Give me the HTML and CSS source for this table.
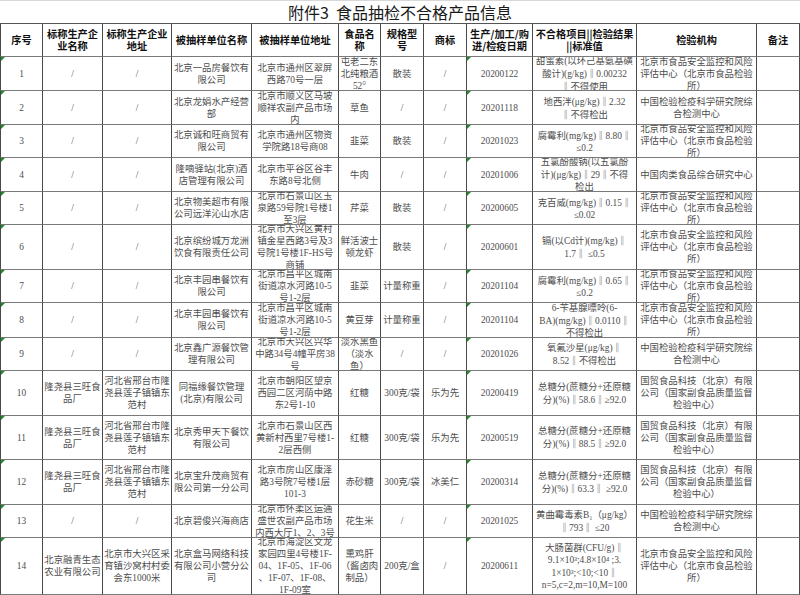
FILE: index.html
```html
<!DOCTYPE html>
<html lang="zh-CN">
<head>
<meta charset="utf-8">
<title>附件3 食品抽检不合格产品信息</title>
<link rel="stylesheet" href="styles.css">
</head>
<body>
<div class="sheet">
  <div class="title">附件3  食品抽检不合格产品信息</div>

  <div class="cell hd">序号</div>
  <div class="cell hd">标称生产企业名称</div>
  <div class="cell hd">标称生产企业地址</div>
  <div class="cell hd">被抽样单位名称</div>
  <div class="cell hd">被抽样单位地址</div>
  <div class="cell hd">食品名称</div>
  <div class="cell hd">规格型号</div>
  <div class="cell hd">商标</div>
  <div class="cell hd">生产/加工/购进/检疫日期</div>
  <div class="cell hd">不合格项目||检验结果<br>||标准值</div>
  <div class="cell hd">检验机构</div>
  <div class="cell hd">备注</div>

  <div class="cell g">1</div>
  <div class="cell">/</div>
  <div class="cell">/</div>
  <div class="cell">北京一品房餐饮有<br>限公司</div>
  <div class="cell">北京市通州区翠屏<br>西路70号一层</div>
  <div class="cell">屯老二东<br>北纯粮酒<br>52°</div>
  <div class="cell">散装</div>
  <div class="cell">/</div>
  <div class="cell g">20200122</div>
  <div class="cell"><span class="t">甜蜜素(以环己基氨基磺<br>酸计)(g/kg)<span class="b">‖</span>0.00232<br><span class="b">‖</span>不得使用</span></div>
  <div class="cell">北京市食品安全监控和风险<br>评估中心（北京市食品检验<br>所）</div>
  <div class="cell"></div>

  <div class="cell g">2</div>
  <div class="cell">/</div>
  <div class="cell">/</div>
  <div class="cell">北京龙娟水产经营<br>部</div>
  <div class="cell">北京市顺义区马坡<br>顺祥农副产品市场<br>内</div>
  <div class="cell">草鱼</div>
  <div class="cell">/</div>
  <div class="cell">/</div>
  <div class="cell g">20201118</div>
  <div class="cell"><span class="t">地西泮(μg/kg)<span class="b">‖</span>2.32<br><span class="b">‖</span>不得检出</span></div>
  <div class="cell">中国检验检疫科学研究院综<br>合检测中心</div>
  <div class="cell"></div>

  <div class="cell g">3</div>
  <div class="cell">/</div>
  <div class="cell">/</div>
  <div class="cell">北京诚和旺商贸有<br>限公司</div>
  <div class="cell">北京市通州区物资<br>学院路18号商08</div>
  <div class="cell">韭菜</div>
  <div class="cell">散装</div>
  <div class="cell">/</div>
  <div class="cell g">20201023</div>
  <div class="cell"><span class="t">腐霉利(mg/kg)<span class="b">‖</span>8.80<span class="b">‖</span><br>≤0.2</span></div>
  <div class="cell">北京市食品安全监控和风险<br>评估中心（北京市食品检验<br>所）</div>
  <div class="cell"></div>

  <div class="cell g">4</div>
  <div class="cell">/</div>
  <div class="cell">/</div>
  <div class="cell">隆嘀驿站(北京)酒<br>店管理有限公司</div>
  <div class="cell">北京市平谷区谷丰<br>东路8号北侧</div>
  <div class="cell">牛肉</div>
  <div class="cell">/</div>
  <div class="cell">/</div>
  <div class="cell g">20201006</div>
  <div class="cell"><span class="t">五氯酚酸钠(以五氯酚<br>计)(μg/kg)<span class="b">‖</span>29<span class="b">‖</span>不得<br>检出</span></div>
  <div class="cell">中国肉类食品综合研究中心</div>
  <div class="cell"></div>

  <div class="cell g">5</div>
  <div class="cell">/</div>
  <div class="cell">/</div>
  <div class="cell">北京物美超市有限<br>公司远洋沁山水店</div>
  <div class="cell">北京市石景山区玉<br>泉路59号院1号楼1<br>至3层</div>
  <div class="cell">芹菜</div>
  <div class="cell">散装</div>
  <div class="cell">/</div>
  <div class="cell g">20200605</div>
  <div class="cell"><span class="t">克百威(mg/kg)<span class="b">‖</span>0.15<span class="b">‖</span><br>≤0.02</span></div>
  <div class="cell">北京市食品安全监控和风险<br>评估中心（北京市食品检验<br>所）</div>
  <div class="cell"></div>

  <div class="cell g">6</div>
  <div class="cell">/</div>
  <div class="cell">/</div>
  <div class="cell">北京缤纷城万龙洲<br>饮食有限责任公司</div>
  <div class="cell">北京市大兴区黄村<br>镇金星西路3号及3<br>号院1号楼1F-HS号<br>商铺</div>
  <div class="cell">鲜活波士<br>顿龙虾</div>
  <div class="cell">散装</div>
  <div class="cell">/</div>
  <div class="cell g">20200601</div>
  <div class="cell"><span class="t">镉(以Cd计)(mg/kg)<span class="b">‖</span><br>1.7<span class="b">‖</span> ≤0.5</span></div>
  <div class="cell">北京市食品安全监控和风险<br>评估中心（北京市食品检验<br>所）</div>
  <div class="cell"></div>

  <div class="cell g">7</div>
  <div class="cell">/</div>
  <div class="cell">/</div>
  <div class="cell">北京丰园串餐饮有<br>限公司</div>
  <div class="cell">北京市昌平区城南<br>街道凉水河路10-5<br>号1-2层</div>
  <div class="cell">韭菜</div>
  <div class="cell">计量称重</div>
  <div class="cell">/</div>
  <div class="cell g">20201104</div>
  <div class="cell"><span class="t">腐霉利(mg/kg)<span class="b">‖</span>0.65<span class="b">‖</span><br>≤0.2</span></div>
  <div class="cell">北京市食品安全监控和风险<br>评估中心（北京市食品检验<br>所）</div>
  <div class="cell"></div>

  <div class="cell g">8</div>
  <div class="cell">/</div>
  <div class="cell">/</div>
  <div class="cell">北京丰园串餐饮有<br>限公司</div>
  <div class="cell">北京市昌平区城南<br>街道凉水河路10-5<br>号1-2层</div>
  <div class="cell">黄豆芽</div>
  <div class="cell">计量称重</div>
  <div class="cell">/</div>
  <div class="cell g">20201104</div>
  <div class="cell"><span class="t">6-苄基腺嘌呤(6-<br>BA)(mg/kg)<span class="b">‖</span>0.0110<span class="b">‖</span><br>不得检出</span></div>
  <div class="cell">北京市食品安全监控和风险<br>评估中心（北京市食品检验<br>所）</div>
  <div class="cell"></div>

  <div class="cell g">9</div>
  <div class="cell">/</div>
  <div class="cell">/</div>
  <div class="cell">北京鑫广源餐饮管<br>理有限公司</div>
  <div class="cell">北京市大兴区兴华<br>中路34号4幢平房38<br>号</div>
  <div class="cell">淡水黑鱼<br>（淡水<br>鱼）</div>
  <div class="cell">/</div>
  <div class="cell">/</div>
  <div class="cell g">20201026</div>
  <div class="cell"><span class="t">氧氟沙星(μg/kg)<span class="b">‖</span><br>8.52<span class="b">‖</span>不得检出</span></div>
  <div class="cell">中国检验检疫科学研究院综<br>合检测中心</div>
  <div class="cell"></div>

  <div class="cell g">10</div>
  <div class="cell">隆尧县三旺食<br>品厂</div>
  <div class="cell">河北省邢台市隆<br>尧县莲子镇镇东<br>范村</div>
  <div class="cell">同福缘餐饮管理<br>(北京)有限公司</div>
  <div class="cell">北京市朝阳区望京<br>西园二区河荫中路<br>东2号1-10</div>
  <div class="cell">红糖</div>
  <div class="cell">300克/袋</div>
  <div class="cell">乐为先</div>
  <div class="cell g">20200419</div>
  <div class="cell"><span class="t">总糖分(蔗糖分+还原糖<br>分)(%)<span class="b">‖</span>58.6<span class="b">‖</span>≥92.0</span></div>
  <div class="cell">国贸食品科技（北京）有限<br>公司（国家副食品质量监督<br>检验中心）</div>
  <div class="cell"></div>

  <div class="cell g">11</div>
  <div class="cell">隆尧县三旺食<br>品厂</div>
  <div class="cell">河北省邢台市隆<br>尧县莲子镇镇东<br>范村</div>
  <div class="cell">北京秀甲天下餐饮<br>有限公司</div>
  <div class="cell">北京市石景山区西<br>黄新村西里7号楼1-<br>2层西侧</div>
  <div class="cell">红糖</div>
  <div class="cell">300克/袋</div>
  <div class="cell">乐为先</div>
  <div class="cell g">20200519</div>
  <div class="cell"><span class="t">总糖分(蔗糖分+还原糖<br>分)(%)<span class="b">‖</span>88.5<span class="b">‖</span>≥92.0</span></div>
  <div class="cell">国贸食品科技（北京）有限<br>公司（国家副食品质量监督<br>检验中心）</div>
  <div class="cell"></div>

  <div class="cell g">12</div>
  <div class="cell">隆尧县三旺食<br>品厂</div>
  <div class="cell">河北省邢台市隆<br>尧县莲子镇镇东<br>范村</div>
  <div class="cell">北京宝升茂商贸有<br>限公司第一分公司</div>
  <div class="cell">北京市房山区康泽<br>路3号院7号楼1层<br>101-3</div>
  <div class="cell">赤砂糖</div>
  <div class="cell">300克/袋</div>
  <div class="cell">冰美仁</div>
  <div class="cell g">20200314</div>
  <div class="cell"><span class="t">总糖分(蔗糖分+还原糖<br>分)(%)<span class="b">‖</span>63.3<span class="b">‖</span> ≥92.0</span></div>
  <div class="cell">国贸食品科技（北京）有限<br>公司（国家副食品质量监督<br>检验中心）</div>
  <div class="cell"></div>

  <div class="cell g">13</div>
  <div class="cell">/</div>
  <div class="cell">/</div>
  <div class="cell">北京碧俊兴海商店</div>
  <div class="cell">北京市怀柔区运通<br>盛世农副产品市场<br>内西大厅1、2、3号</div>
  <div class="cell">花生米</div>
  <div class="cell">/</div>
  <div class="cell">/</div>
  <div class="cell g">20201025</div>
  <div class="cell"><span class="t">黄曲霉毒素B₁（μg/kg）<br><span class="b">‖</span>793<span class="b">‖</span> ≤20</span></div>
  <div class="cell">中国检验检疫科学研究院综<br>合检测中心</div>
  <div class="cell"></div>

  <div class="cell g">14</div>
  <div class="cell">北京融青生态<br>农业有限公司</div>
  <div class="cell">北京市大兴区采<br>育镇沙窝村村委<br>会东1000米</div>
  <div class="cell">北京盒马网络科技<br>有限公司小营分公<br>司</div>
  <div class="cell">北京市海淀区文龙<br>家园四里4号楼1F-<br>04、1F-05、1F-06<br>、1F-07、1F-08、<br>1F-09室</div>
  <div class="cell">熏鸡肝<br>（酱卤肉<br>制品）</div>
  <div class="cell">200克/盒</div>
  <div class="cell">/</div>
  <div class="cell g">20200611</div>
  <div class="cell"><span class="t">大肠菌群(CFU/g)<span class="b">‖</span><br>9.1×10³;4.8×10⁴ ;3.<br>1×10³;&lt;10;&lt;10<span class="b">‖</span><br>n=5,c=2,m=10,M=100</span></div>
  <div class="cell">北京市食品安全监控和风险<br>评估中心（北京市食品检验<br>所）</div>
  <div class="cell"></div>
</div>
</body>
</html>
```

FILE: styles.css
```css
html, body {
  margin: 0;
  padding: 0;
  background: #ffffff;
}

.sheet {
  width: 800px;
  height: 595px;
  overflow: hidden;
  display: grid;
  grid-template-columns: 43px 60px 69px 80px 87px 42px 43px 43px 66px 104px 120px 43px;
  grid-template-rows: 24px 33px 34px 34px 33px 34px 33px 45px 33px 35px 33px 45px 44px 45px 33px 57px;
  font-family: "Liberation Serif", "Noto Sans CJK SC", serif;
  font-size: 9.4px;
  line-height: 12px;
  color: #4d4d4d;
}

.title {
  grid-column: 1 / -1;
  box-sizing: border-box;
  border-top: 1px solid #d8d8d8;
  border-bottom: 1px solid #555555;
  display: flex;
  align-items: center;
  justify-content: center;
  font-family: "Noto Sans CJK SC", sans-serif;
  font-size: 16px;
  font-weight: 400;
  color: #1a1a1a;
  padding-bottom: 1px;
  white-space: pre;
}

.cell {
  position: relative;
  box-sizing: border-box;
  border-right: 1px solid #4a4a4a;
  border-bottom: 1px solid #7a7a7a;
  display: flex;
  align-items: center;
  justify-content: center;
  text-align: center;
  white-space: nowrap;
  overflow: hidden;
  padding: 0 1px;
}

.cell:nth-child(12n + 2) {
  border-left: 1px solid #4a4a4a;
}

.t {
  display: block;
  text-align: center;
}

.hd {
  white-space: normal;
  word-break: break-all;
  font-family: "Noto Sans CJK SC", sans-serif;
  font-size: 10.2px;
  font-weight: 700;
  color: #111111;
}

.b {
  font-family: "Noto Sans CJK SC", sans-serif;
}

.g::before {
  content: "";
  position: absolute;
  left: 0;
  top: 0;
  border-top: 4px solid #1f8a2a;
  border-right: 4px solid transparent;
}
```
